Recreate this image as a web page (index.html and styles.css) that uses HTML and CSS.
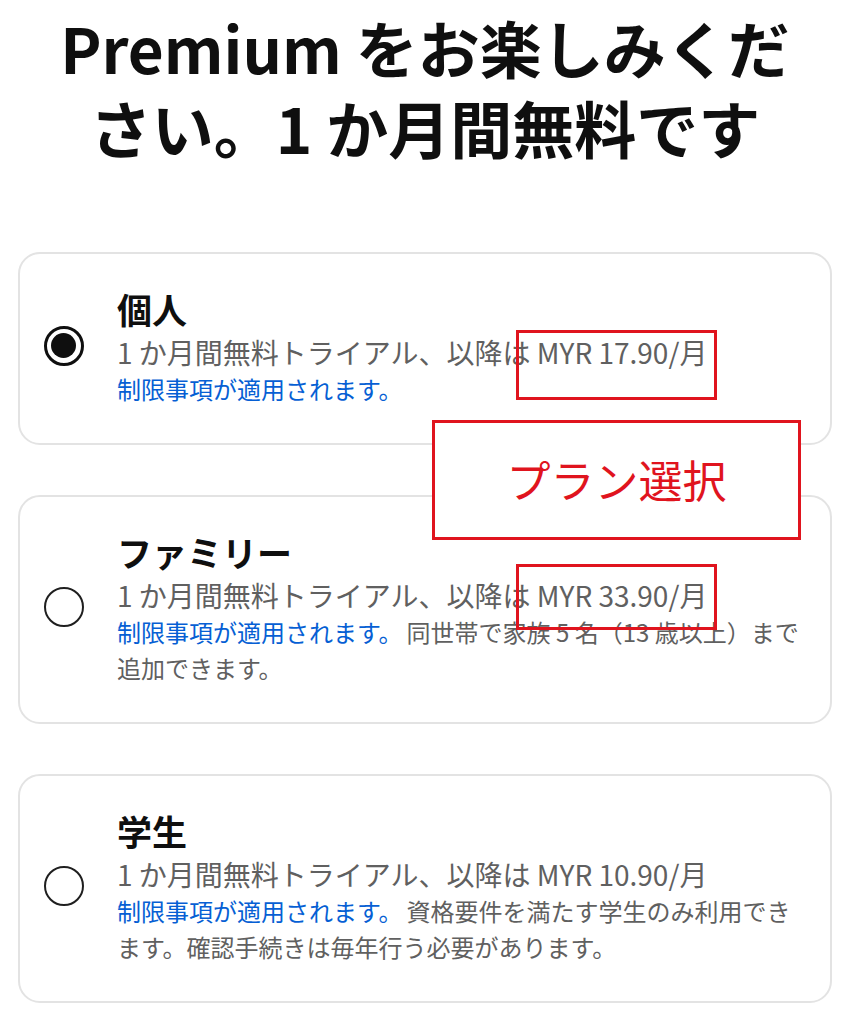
FILE: index.html
```html
<!DOCTYPE html>
<html lang="ja">
<head>
    <meta charset="UTF-8">
    <meta name="viewport" content="width=device-width, initial-scale=1.0">
    <title>YouTube Premium</title>
    <link rel="stylesheet" href="styles.css">
</head>
<body>
    <div class="page">
        <h1 class="headline">Premium をお楽しみください。1 か月間無料です</h1>

        <div class="plans">
            <div class="plan">
                <span class="radio checked"></span>
                <div class="planText">
                    <div class="planName">個人</div>
                    <div class="planPrice">1 か月間無料トライアル、以降は MYR 17.90/月</div>
                    <div class="planNote"><a class="terms" href="#">制限事項が適用されます。</a></div>
                </div>
            </div>

            <div class="plan">
                <span class="radio"></span>
                <div class="planText">
                    <div class="planName">ファミリー</div>
                    <div class="planPrice">1 か月間無料トライアル、以降は MYR 33.90/月</div>
                    <div class="planNote"><a class="terms" href="#">制限事項が適用されます。</a>同世帯で家族 5 名（13 歳以上）まで追加できます。</div>
                </div>
            </div>

            <div class="plan">
                <span class="radio"></span>
                <div class="planText">
                    <div class="planName">学生</div>
                    <div class="planPrice">1 か月間無料トライアル、以降は MYR 10.90/月</div>
                    <div class="planNote"><a class="terms" href="#">制限事項が適用されます。</a>資格要件を満たす学生のみ利用できます。確認手続きは毎年行う必要があります。</div>
                </div>
            </div>
        </div>

        <!-- annotations drawn over the screenshot -->
        <div class="mark markPersonal"></div>
        <div class="mark markFamily"></div>
        <div class="callout">プラン選択</div>
    </div>
</body>
</html>
```

FILE: styles.css
```css
body {
    margin: 0;
    padding: 0;
    background-color: #ffffff;
    font-family: "Noto Sans CJK JP", "Noto Sans", sans-serif;
    color: #0f0f0f;
}

.page {
    position: relative;
    width: 850px;
}

.headline {
    width: 740px;
    margin: 7px auto 0;
    font-size: 62px;
    font-weight: 700;
    line-height: 80px;
    text-align: center;
}

.plans {
    display: flex;
    flex-direction: column;
    gap: 50px;
    width: 814px;
    margin: 85px auto 0;
    box-sizing: border-box;
}

.plan {
    display: flex;
    align-items: center;
    padding: 30px 24px 36px 24px;
    border: 2px solid #e3e3e3;
    border-radius: 22px;
}

.radio {
    flex: none;
    position: relative;
    width: 40px;
    height: 40px;
    margin-right: 33px;
    box-sizing: border-box;
    border: 2px solid #1f1f1f;
    border-radius: 50%;
}

.radio.checked {
    border-width: 3.5px;
    border-color: #0f0f0f;
}

.radio.checked::after {
    content: "";
    position: absolute;
    left: 4px;
    top: 4px;
    width: 25px;
    height: 25px;
    border-radius: 50%;
    background-color: #0f0f0f;
}

.planText {
    flex: 1;
}

.planName {
    font-size: 35px;
    font-weight: 700;
    line-height: 49px;
}

.planPrice {
    font-size: 28px;
    line-height: 38px;
    color: #606060;
}

.planNote {
    font-size: 24px;
    line-height: 36px;
    color: #606060;
}

.terms {
    margin-right: 4px;
    color: #065fd4;
    text-decoration: none;
}

.mark {
    position: absolute;
    box-sizing: border-box;
    border: 3px solid #e0141e;
}

.markPersonal {
    left: 516px;
    top: 323px;
    width: 201px;
    height: 70px;
}

.markFamily {
    left: 516px;
    top: 557px;
    width: 201px;
    height: 66px;
}

.callout {
    position: absolute;
    left: 432px;
    top: 413px;
    width: 369px;
    height: 120px;
    box-sizing: border-box;
    display: flex;
    align-items: center;
    justify-content: center;
    border: 3px solid #e0141e;
    background-color: #ffffff;
    color: #e0141e;
    font-size: 44px;
    padding-bottom: 2px;
}
```
